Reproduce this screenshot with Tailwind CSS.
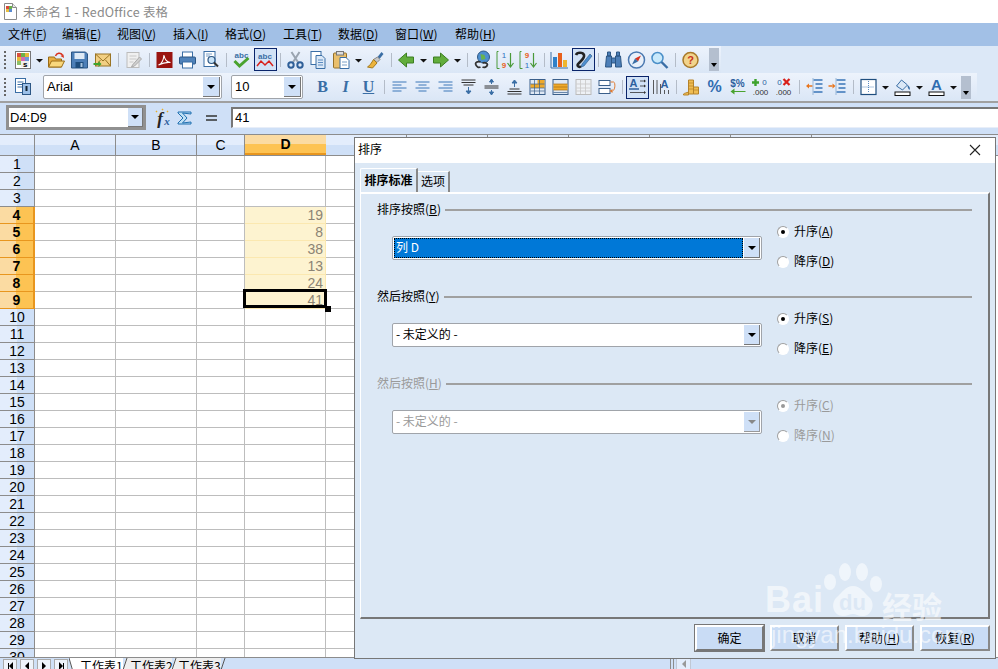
<!doctype html>
<html lang="zh-CN">
  <head>
    <meta charset="UTF-8" />
    <title>未命名 1 - RedOffice 表格</title>
    <script src="https://cdn.jsdelivr.net/npm/@tailwindcss/browser@4"></script>
  </head>
  <body class="relative flex flex-col w-[998px] h-[669px] overflow-hidden bg-white text-[12px] text-black font-['Noto_Sans_CJK_SC',sans-serif]">
    <!-- title bar -->
    <div class="flex items-center h-[23px] shrink-0 bg-white pl-[3px] text-[#8a8a8a] text-[12.5px]">
      <svg class="w-[15px] h-[17px] mr-[5px]" viewBox="0 0 15 17"><path d="M1.5.5h8l4 4v12h-12z" fill="#fff" stroke="#8a8a8a"/><path d="M9.5.5v4h4" fill="#e8e8e8" stroke="#8a8a8a"/><rect x="3" y="3" width="3" height="3" fill="#d84a3a"/><rect x="6" y="3" width="3" height="3" fill="#6ab04a"/><rect x="3" y="6" width="3" height="3" fill="#e8c040"/><rect x="6" y="6" width="3" height="3" fill="#5a8ad0"/></svg>
      <span class="mt-[2px] tracking-[0.2px]">未命名 1 - RedOffice 表格</span>
    </div>

    <!-- menu bar -->
    <div class="flex items-center h-[23px] shrink-0 bg-[#a2c0e6] pl-[8px] pb-[2px] text-[12px]">
      <span class="w-[54px]">文件(<u>F</u>)</span>
      <span class="w-[55px]">编辑(<u>E</u>)</span>
      <span class="w-[56px]">视图(<u>V</u>)</span>
      <span class="w-[52px]">插入(<u>I</u>)</span>
      <span class="w-[58px]">格式(<u>O</u>)</span>
      <span class="w-[55px]">工具(<u>T</u>)</span>
      <span class="w-[57px]">数据(<u>D</u>)</span>
      <span class="w-[60px]">窗口(<u>W</u>)</span>
      <span>帮助(<u>H</u>)</span>
    </div>

    <!-- standard toolbar -->
    <div class="flex h-[27px] shrink-0 bg-[#dce8f7]">
      <div class="flex items-center w-[721px] bg-gradient-to-b from-[#edf3fc] to-[#dae6f6]">
        <span class="w-[12px] h-[18px] ml-[4px] mr-[-4px] border-l-2 border-dotted border-[#666]"></span>
        <svg class="w-[22px] h-[20px]" viewBox="0 0 20 20"><rect x="2.5" y="1.5" width="15" height="17" fill="#fff" stroke="#777"/><rect x="4" y="3" width="4" height="4" fill="#d9503f"/><rect x="8" y="3" width="4" height="4" fill="#6cb14a"/><rect x="12" y="3" width="4" height="4" fill="#e6b93a"/><rect x="4" y="7" width="4" height="4" fill="#e6b93a"/><rect x="8" y="7" width="4" height="4" fill="#d56bb0"/><rect x="12" y="7" width="4" height="4" fill="#6d9ad8"/><rect x="4" y="11" width="4" height="4" fill="#8dc06a"/><rect x="8" y="11" width="8" height="6" fill="#eee"/><text x="10" y="17" font-size="8" font-family="Liberation Sans" font-weight="700">s</text></svg>
        <svg class="w-[11px] h-[20px]" viewBox="0 0 11 20"><path d="M2 9h7l-3.5 3.5z" fill="#111"/></svg>
        <svg class="w-[23px] h-[20px]" viewBox="0 0 20 20"><path d="M2 17V7h6l1 2h6v8z" fill="#e9ae42" stroke="#9a6c16"/><path d="M2 17l3-6h13l-3 6z" fill="#f9d77c" stroke="#9a6c16"/><path d="M9 6c1-3 5-4 7-1" fill="none" stroke="#d8321f" stroke-width="1.4"/><path d="M17.5 8l-3.5-2 3-1.5z" fill="#d8321f"/></svg>
        <svg class="w-[23px] h-[20px]" viewBox="0 0 20 20"><path d="M2 2h14l2 2v14H2z" fill="#4d7fb8" stroke="#2c5684"/><rect x="5" y="3" width="10" height="6" fill="#dfeaf6"/><rect x="6" y="12" width="8" height="6" fill="#1f4e7e"/><rect x="11" y="13" width="2" height="4" fill="#a8c4e0"/></svg>
        <svg class="w-[23px] h-[20px]" viewBox="0 0 20 20"><rect x="3" y="4" width="15" height="12" fill="#f2cf83" stroke="#9a7424"/><path d="M3 4l7.5 7L18 4M3 16l5-6M18 16l-5-6" fill="none" stroke="#9a7424"/><path d="M1 13h5v-2l3 3-3 3v-2H1z" fill="#3ea32e"/></svg>
        <span class="w-px h-[14px] mx-[3.5px] bg-[#b4bcc8]"></span>
        <svg class="w-[23px] h-[20px]" viewBox="0 0 20 20"><rect x="3.5" y="2.5" width="12" height="15" fill="#f0f0f0" stroke="#bcbcbc"/><path d="M6 6h7M6 9h7M6 12h4" stroke="#c8c8c8"/><path d="M9 15l7-8 2 2-7 7-3 1z" fill="#d0d0d0" stroke="#aaa"/></svg>
        <span class="w-px h-[14px] mx-[3.5px] bg-[#b4bcc8]"></span>
        <svg class="w-[23px] h-[20px]" viewBox="0 0 20 20"><rect x="2" y="2" width="16" height="16" fill="#9a1410"/><path d="M4 15c3-1 5-5 5.5-10 .5 4 3 7 6.5 7.5-4-.5-8 .5-12 2.500z" fill="none" stroke="#fff" stroke-width="1.1"/></svg>
        <svg class="w-[23px] h-[20px]" viewBox="0 0 20 20"><rect x="5" y="2" width="10" height="6" fill="#fff" stroke="#3a6ea5"/><rect x="2" y="7" width="16" height="7" rx="1" fill="#4f82ba" stroke="#2c5684"/><rect x="5" y="12" width="10" height="6" fill="#fff" stroke="#3a6ea5"/></svg>
        <svg class="w-[23px] h-[20px]" viewBox="0 0 20 20"><rect x="3.5" y="1.5" width="11" height="15" fill="#fff" stroke="#3a6ea5"/><path d="M5.5 4h6M5.5 6h4" stroke="#7aa0c8"/><circle cx="11" cy="10" r="3.5" fill="#c9e3f7" stroke="#2c5684" stroke-width="1.2"/><path d="M13.5 12.5l4 4" stroke="#333" stroke-width="2"/></svg>
        <span class="w-px h-[14px] mx-[3.5px] bg-[#b4bcc8]"></span>
        <svg class="w-[23px] h-[20px]" viewBox="0 0 20 20"><text x="10" y="8" font-size="8" text-anchor="middle" fill="#3a6ea5" font-family="Liberation Sans" font-weight="700">abc</text><path d="M3 11l5 5 9-8" fill="none" stroke="#4aa32f" stroke-width="3"/></svg>
        <div class="flex items-center justify-center w-[23px] h-[23px] mx-[0.5px] border border-[#0a246a] bg-[#d2e2f6]">
          <svg class="w-[20px] h-[20px]" viewBox="0 0 20 20"><text x="10" y="9" font-size="8" text-anchor="middle" fill="#3a6ea5" font-family="Liberation Sans" font-weight="700">abc</text><path d="M2 16l4-5 4 4 4-4 4 5" fill="none" stroke="#d8201a" stroke-width="1.5"/></svg>
        </div>
        <span class="w-px h-[14px] mx-[3px] bg-[#b4bcc8]"></span>
        <svg class="w-[23px] h-[20px]" viewBox="0 0 20 20"><path d="M6 2l7 11M14 2L7 13" stroke="#9aa4b0" stroke-width="2"/><circle cx="5.5" cy="15" r="2.7" fill="none" stroke="#2f5f98" stroke-width="2"/><circle cx="14.5" cy="15" r="2.7" fill="none" stroke="#2f5f98" stroke-width="2"/></svg>
        <svg class="w-[23px] h-[20px]" viewBox="0 0 20 20"><rect x="2.5" y="1.5" width="10" height="13" fill="#fff" stroke="#3a6ea5"/><path d="M7.5 5.5h6l3 3v10h-9z" fill="#dbe8f6" stroke="#3a6ea5"/><path d="M9.5 10h5M9.5 12.5h5M9.5 15h5" stroke="#5a8ac0"/></svg>
        <svg class="w-[23px] h-[20px]" viewBox="0 0 20 20"><rect x="2" y="3" width="13" height="15" rx="1" fill="#e9bf6c" stroke="#94702a"/><rect x="5" y="1.5" width="7" height="3.5" fill="#ddd" stroke="#777"/><path d="M8.500 7.5h6l3 3v8h-9z" fill="#fff" stroke="#3a6ea5"/><path d="M10.5 12h5M10.5 15h5" stroke="#7aa0c8"/></svg>
        <svg class="w-[11px] h-[20px]" viewBox="0 0 11 20"><path d="M2 9h7l-3.5 3.5z" fill="#111"/></svg>
        <svg class="w-[23px] h-[20px]" viewBox="0 0 20 20"><path d="M12 7l4-5 2 2-4 5z" fill="#3a6ea5"/><path d="M12 7l2.5 2.5-3 3-3.500-3z" fill="#c8c8c8" stroke="#888"/><path d="M8 9.5l3.5 3.5L7 18l-5-1c2-1 4-4 6-7.5z" fill="#ecb33c" stroke="#a57a1c"/></svg>
        <span class="w-px h-[14px] mx-[3.5px] bg-[#b4bcc8]"></span>
        <svg class="w-[23px] h-[20px]" viewBox="0 0 20 20"><path d="M2 10l8-7v4h7v6h-7v4z" fill="#62ad3c" stroke="#3d7f22"/></svg>
        <svg class="w-[11px] h-[20px]" viewBox="0 0 11 20"><path d="M2 9h7l-3.5 3.5z" fill="#111"/></svg>
        <svg class="w-[23px] h-[20px]" viewBox="0 0 20 20"><path d="M18 10l-8-7v4H3v6h7v4z" fill="#62ad3c" stroke="#3d7f22"/></svg>
        <svg class="w-[11px] h-[20px]" viewBox="0 0 11 20"><path d="M2 9h7l-3.5 3.5z" fill="#111"/></svg>
        <span class="w-px h-[14px] mx-[3.5px] bg-[#b4bcc8]"></span>
        <svg class="w-[23px] h-[20px]" viewBox="0 0 20 20"><circle cx="11" cy="7" r="6" fill="#4d8fd0" stroke="#2c5684"/><path d="M8 4l4 1 1 4-4 1z" fill="#69b24c"/><path d="M3 14c0-2 3-3 5-2M10 13c2-1 5 0 5 2M3 14c1 3 3 4 5 3M15 15c-1 2-3 3-5 2" fill="none" stroke="#333" stroke-width="1.8"/></svg>
        <svg class="w-[23px] h-[20px]" viewBox="0 0 20 20"><path d="M3 1.500H1.500v17H4" fill="none" stroke="#4a9a3a"/><text x="8.5" y="8" font-size="8" text-anchor="middle" fill="#2f6fc0" font-family="Liberation Sans">1</text><text x="8.5" y="18" font-size="8" text-anchor="middle" fill="#e8601c" font-weight="700" font-family="Liberation Sans">9</text><path d="M15 3v13m-3-3l3 4 3-4" fill="none" stroke="#4a9a3a" stroke-width="1.2"/></svg>
        <svg class="w-[23px] h-[20px]" viewBox="0 0 20 20"><path d="M3 1.500H1.500v17H4" fill="none" stroke="#4a9a3a"/><text x="8.5" y="8" font-size="8" text-anchor="middle" fill="#e8601c" font-weight="700" font-family="Liberation Sans">9</text><text x="8.5" y="18" font-size="8" text-anchor="middle" fill="#2f6fc0" font-family="Liberation Sans">1</text><path d="M15 3v13m-3-3l3 4 3-4" fill="none" stroke="#4a9a3a" stroke-width="1.2"/></svg>
        <span class="w-px h-[14px] mx-[3.5px] bg-[#b4bcc8]"></span>
        <svg class="w-[23px] h-[20px]" viewBox="0 0 20 20"><path d="M1.5 2v16h17" fill="none" stroke="#3a6ea5"/><rect x="3.5" y="7" width="4" height="10" fill="#2f80c8"/><rect x="8.5" y="3" width="4" height="14" fill="#e8601c"/><rect x="13.5" y="10" width="4" height="7" fill="#efb52e"/></svg>
        <div class="flex items-center justify-center w-[23px] h-[23px] mx-[0.5px] border border-[#0a246a] bg-[#d2e2f6]">
          <svg class="w-[20px] h-[20px]" viewBox="0 0 20 20"><path d="M3 5c1-3 7-3 8 0 .5 2-1 4-3 6l-3 3c-1.500 2 1.500 4 3 2" fill="none" stroke="#222" stroke-width="2.6"/><path d="M9 14l8-10 2 2-8 10-3 1z" fill="#4d8fd0" stroke="#2c5684" stroke-width=".6"/></svg>
        </div>
        <span class="w-px h-[14px] mx-[3px] bg-[#b4bcc8]"></span>
        <svg class="w-[23px] h-[20px]" viewBox="0 0 20 20"><path d="M3 6h5v11H2zM12 6h5l1 11h-6zM8 8h4v5H8zM4 2h3v4H4zM13 2h3v4h-3z" fill="#4d7fb8" stroke="#2c5684"/></svg>
        <svg class="w-[23px] h-[20px]" viewBox="0 0 20 20"><circle cx="10" cy="10" r="8" fill="#e8f0fa" stroke="#4a78b0" stroke-width="1.5"/><path d="M14.5 5.500l-3 6-3-3z" fill="#d8321f"/><path d="M5.500 14.500l3-6 3 3z" fill="#3a6ea5"/></svg>
        <svg class="w-[23px] h-[20px]" viewBox="0 0 20 20"><circle cx="8" cy="8" r="5.500" fill="#c9e9fb" stroke="#4a8fc8" stroke-width="1.5"/><path d="M12 12l6 6" stroke="#3a6ea5" stroke-width="2.4"/></svg>
        <span class="w-px h-[14px] mx-[3.5px] bg-[#b4bcc8]"></span>
        <svg class="w-[23px] h-[20px]" viewBox="0 0 20 20"><circle cx="10" cy="10" r="7.5" fill="#f2d48c" stroke="#a8792a" stroke-width="1.5"/><text x="10" y="14" font-size="11" text-anchor="middle" fill="#c8321f" font-weight="700" font-family="Liberation Sans">?</text></svg>
        <div class="flex items-end justify-center w-[10px] h-[23px] ml-[7px] pb-[4px] bg-[#b4bfcf]"><span class="border-x-[3px] border-t-[4px] border-x-transparent border-t-black"></span></div>
      </div>
    </div>

    <!-- formatting toolbar -->
    <div class="flex h-[30px] shrink-0 bg-[#dce8f7] border-b-2 border-[#a0a0a0]">
      <div class="flex items-center w-[977px] bg-gradient-to-b from-[#edf3fc] to-[#dae6f6]">
        <span class="w-[12px] h-[18px] ml-[4px] mr-[-4px] border-l-2 border-dotted border-[#666]"></span>
        <svg class="w-[22px] h-[20px]" viewBox="0 0 20 20"><rect x="2.5" y="1.5" width="10" height="14" fill="#fff" stroke="#3a6ea5"/><path d="M4.5 5h6M4.5 7.5h6M4.5 10h6" stroke="#3a6ea5"/><rect x="9.5" y="6.5" width="8" height="11" fill="#9cc0e8" stroke="#2c5684"/><path d="M13.5 9v5" stroke="#123" stroke-width="2"/></svg>
        <div class="flex items-center w-[179px] h-[24px] ml-[9px] border border-[#a0a4aa] rounded-[2px] bg-white pl-[3px] font-['Liberation_Sans',sans-serif] text-[13px]">
          <span class="flex-1">Arial</span>
          <span class="flex items-center justify-center w-[17px] h-[20px] mr-px bg-[#cfe0f7] border-r border-b border-[#777]"><span class="border-x-[4px] border-t-[4px] border-x-transparent border-t-black"></span></span>
        </div>
        <div class="flex items-center w-[72px] h-[24px] ml-[9px] border border-[#a0a4aa] rounded-[2px] bg-white pl-[3px] font-['Liberation_Sans',sans-serif] text-[13px]">
          <span class="flex-1">10</span>
          <span class="flex items-center justify-center w-[17px] h-[20px] mr-px bg-[#cfe0f7] border-r border-b border-[#777]"><span class="border-x-[4px] border-t-[4px] border-x-transparent border-t-black"></span></span>
        </div>
        <span class="flex justify-center w-[23px] ml-[8px] font-['Liberation_Serif',serif] font-bold text-[16px] text-[#3a6ea5]">B</span>
        <span class="flex justify-center w-[23px] font-['Liberation_Serif',serif] font-bold italic text-[16px] text-[#3a6ea5]">I</span>
        <span class="flex justify-center w-[23px] font-['Liberation_Serif',serif] font-bold underline text-[16px] text-[#3a6ea5]">U</span>
        <span class="w-px h-[14px] mx-[3.5px] bg-[#b4bcc8]"></span>
        <svg class="w-[23px] h-[20px]" viewBox="0 0 20 20"><path d="M3 5h14M3 8h9M3 11h14M3 14h9" stroke="#3a76b8"/></svg>
        <svg class="w-[23px] h-[20px]" viewBox="0 0 20 20"><path d="M3 5h14M6 8h8M3 11h14M6 14h8" stroke="#3a76b8"/></svg>
        <svg class="w-[23px] h-[20px]" viewBox="0 0 20 20"><path d="M3 5h14M8 8h9M3 11h14M8 14h9" stroke="#3a76b8"/></svg>
        <svg class="w-[23px] h-[20px]" viewBox="0 0 20 20"><path d="M3 3h14M3 5.5h14M5 8h10" stroke="#333"/><path d="M10 10v4m-2.500 0h5l-2.500 3z" fill="#3a6ea5" stroke="#3a6ea5"/></svg>
        <svg class="w-[23px] h-[20px]" viewBox="0 0 20 20"><path d="M3 9h14M3 11h14" stroke="#333"/><path d="M10 2l-2 3h4zM10 18l-2-3h4zM10 5v2M10 13v2" fill="#3a6ea5" stroke="#3a6ea5"/></svg>
        <svg class="w-[23px] h-[20px]" viewBox="0 0 20 20"><path d="M5 12h10M3 14.5h14M3 17h14" stroke="#333"/><path d="M10 10V6M7.5 6h5L10 3z" fill="#3a6ea5" stroke="#3a6ea5"/></svg>
        <svg class="w-[23px] h-[20px]" viewBox="0 0 20 20"><rect x="2.5" y="2.5" width="15" height="15" fill="#dfe8f4" stroke="#3a5f8a"/><rect x="3" y="7" width="14" height="4" fill="#efa92a"/><rect x="10" y="3" width="7" height="4" fill="#efa92a"/><path d="M3 7h14M3 11h14M3 14h14M7 3v14M12 3v14" stroke="#3a5f8a" stroke-width=".7"/></svg>
        <svg class="w-[23px] h-[20px]" viewBox="0 0 20 20"><rect x="2.5" y="2.5" width="15" height="15" fill="#dfe8f4" stroke="#3a5f8a"/><rect x="3" y="7" width="14" height="6" fill="#efa92a"/><path d="M3 7h14M3 10h14M3 13h14" stroke="#a86c10" stroke-width=".7"/><path d="M3 15.5h14" stroke="#3a5f8a" stroke-width=".7"/></svg>
        <svg class="w-[23px] h-[20px]" viewBox="0 0 20 20"><rect x="2.5" y="2.5" width="15" height="15" fill="#eef1f5" stroke="#bbb"/><path d="M3 7h14M3 11h14M3 14h14M7 3v14M12 3v14" stroke="#c8c8c8" stroke-width=".8"/></svg>
        <svg class="w-[23px] h-[20px]" viewBox="0 0 20 20"><rect x="2.5" y="3.5" width="11" height="5" fill="#fff" stroke="#3a5f8a"/><rect x="2.5" y="11.5" width="11" height="5" fill="#fff" stroke="#3a5f8a"/><path d="M14 5h3c2 0 2 8-1 9" fill="none" stroke="#e07a30"/><path d="M13 14l3-2v4z" fill="#e07a30"/></svg>
        <span class="w-px h-[14px] mx-[3.5px] bg-[#b4bcc8]"></span>
        <div class="flex items-center justify-center w-[23px] h-[23px] border border-[#0a246a] bg-[#d2e2f6]">
          <svg class="w-[20px] h-[20px]" viewBox="0 0 20 20"><text x="5.5" y="10" font-size="11" text-anchor="middle" fill="#2c5f9e" font-weight="700" font-family="Liberation Sans">A</text><path d="M1 12h10" stroke="#2c5f9e" stroke-width="1.5"/><path d="M12 4h5M12 9h5M2 15.5h15" stroke="#333" stroke-width=".8"/><path d="M18 4l-2-1.5v3zM18 9l-2-1.5v3zM18 15.5l-2-1.5v3z" fill="#333"/></svg>
        </div>
        <svg class="w-[23px] h-[20px]" viewBox="0 0 20 20"><text x="14" y="11" font-size="11" text-anchor="middle" fill="#2c5f9e" font-weight="700" font-family="Liberation Sans">A</text><path d="M3 3v14M6.5 3v14M10 7v10M14 13v4M18 13v4" stroke="#333" stroke-width=".8"/></svg>
        <span class="w-px h-[14px] mx-[3.5px] bg-[#b4bcc8]"></span>
        <svg class="w-[23px] h-[20px]" viewBox="0 0 20 20"><path d="M7 3h5v14H7z" fill="#efbc52" stroke="#b5832a"/><path d="M12 10h5v7h-5z" fill="#efbc52" stroke="#b5832a"/><path d="M2 17c1-1 3-1 5-2v3H2z" fill="#efbc52" stroke="#b5832a"/><path d="M7 6h5M7 9h5M7 12h5M12 13h5" stroke="#b5832a" stroke-width=".7"/></svg>
        <span class="flex justify-center w-[23px] font-['Liberation_Sans',sans-serif] font-bold text-[16px] text-[#2f6cb0]">%</span>
        <svg class="w-[23px] h-[20px]" viewBox="0 0 20 20"><text x="10" y="10" font-size="10" text-anchor="middle" fill="#2c5f9e" font-weight="700" font-family="Liberation Sans">$%</text><path d="M18 14H7v-2.5L3 14.500l4 3V15h11z" fill="#4aa32f"/></svg>
        <svg class="w-[23px] h-[20px]" viewBox="0 0 20 20"><path d="M5 2v7M1.5 5.500h7" stroke="#3ea32e" stroke-width="2.4"/><text x="14" y="8" font-size="8" text-anchor="middle" fill="#2c5f9e" font-family="Liberation Sans">0</text><text x="10" y="18" font-size="8" text-anchor="middle" fill="#333" font-family="Liberation Sans">.000</text></svg>
        <svg class="w-[23px] h-[20px]" viewBox="0 0 20 20"><text x="6" y="8" font-size="8" text-anchor="middle" fill="#2c5f9e" font-family="Liberation Sans">0</text><path d="M10 2l6 6M16 2l-6 6" stroke="#d8201a" stroke-width="2.2"/><text x="10" y="18" font-size="8" text-anchor="middle" fill="#333" font-family="Liberation Sans">.000</text></svg>
        <span class="w-px h-[14px] mx-[3.5px] bg-[#b4bcc8]"></span>
        <svg class="w-[23px] h-[20px]" viewBox="0 0 20 20"><path d="M9 3h9M11 7h7M11 11h7M9 15h9" stroke="#3a76b8" stroke-width="1.3"/><path d="M8 9H4" stroke="#e8751c" stroke-width="1.5"/><path d="M1.5 9l3-2.5v5z" fill="#e8751c"/><path d="M8.500 1v17" stroke="#7aa0c8" stroke-width=".7"/></svg>
        <svg class="w-[23px] h-[20px]" viewBox="0 0 20 20"><path d="M9 3h9M11 7h7M11 11h7M9 15h9" stroke="#3a76b8" stroke-width="1.3"/><path d="M1 9h4" stroke="#e8751c" stroke-width="1.5"/><path d="M8 9L5 6.5v5z" fill="#e8751c"/><path d="M8.500 1v17" stroke="#7aa0c8" stroke-width=".7"/></svg>
        <span class="w-px h-[14px] mx-[3.5px] bg-[#b4bcc8]"></span>
        <svg class="w-[23px] h-[20px]" viewBox="0 0 20 20"><rect x="2.5" y="2.5" width="15" height="15" fill="#fff" stroke="#1f4e7e" stroke-width="1.2"/><path d="M10 4v12M4 10h12" stroke="#5a8ac0" stroke-dasharray="1 1"/></svg>
        <svg class="w-[11px] h-[20px]" viewBox="0 0 11 20"><path d="M2 9h7l-3.5 3.500z" fill="#111"/></svg>
        <svg class="w-[23px] h-[20px]" viewBox="0 0 20 20"><path d="M4 9l5-6 6 5-5 5z" fill="#dbe8f6" stroke="#3a6ea5"/><path d="M15 8c2 1 3 3 2 5-1-1-2-2-2-5z" fill="#3a6ea5"/><rect x="2.5" y="15" width="15" height="3.5" fill="#fff" stroke="#111"/></svg>
        <svg class="w-[11px] h-[20px]" viewBox="0 0 11 20"><path d="M2 9h7l-3.5 3.500z" fill="#111"/></svg>
        <svg class="w-[23px] h-[20px]" viewBox="0 0 20 20"><text x="10" y="13" font-size="15" text-anchor="middle" fill="#2f6cb0" font-weight="700" font-family="Liberation Sans">A</text><rect x="2.5" y="15" width="15" height="3.5" fill="#fff" stroke="#111"/></svg>
        <svg class="w-[11px] h-[20px]" viewBox="0 0 11 20"><path d="M2 9h7l-3.5 3.500z" fill="#111"/></svg>
        <div class="flex items-end justify-center w-[10px] h-[23px] ml-[2px] pb-[4px] bg-[#b4bfcf]"><span class="border-x-[3px] border-t-[4px] border-x-transparent border-t-black"></span></div>
      </div>
    </div>

    <!-- formula bar -->
    <div class="flex items-start h-[32px] shrink-0 bg-[#cfe0f7] border-b border-[#8c8c8c] pl-[6px]">
      <div class="flex items-center w-[140px] h-[25px] mt-[2px] border-[3px] border-[#909090] bg-white pl-[1px] font-['Liberation_Sans',sans-serif] text-[13px]">
        <span class="flex-1">D4:D9</span>
        <span class="flex items-center justify-center w-[15px] h-[19px] bg-[#cfe0f7] border-r border-b border-[#777]"><span class="border-x-[4px] border-t-[4px] border-x-transparent border-t-black"></span></span>
      </div>
      <svg class="w-[22px] h-[20px] mt-[5px] ml-[5px]" viewBox="0 0 22 20"><text x="9" y="16" font-size="17" text-anchor="middle" fill="#222" font-style="italic" font-weight="700" font-family="Liberation Serif">f</text><text x="16" y="17" font-size="11" text-anchor="middle" fill="#2c5f9e" font-style="italic" font-weight="700" font-family="Liberation Serif">x</text><path d="M5 3l1 1M11 1l1 1M16 3l1 1" stroke="#e8b02a" stroke-width="1.5"/></svg>
      <svg class="w-[22px] h-[20px] mt-[5px] ml-[1px]" viewBox="0 0 22 20"><path d="M4 4h13v2L8.500 5 13 10l-4.500 5 8.500-1v2H4v-1l5-5-5-5z" fill="#bfe0f5" stroke="#1f6fb0"/></svg>
      <svg class="w-[22px] h-[20px] mt-[5px] ml-[4px]" viewBox="0 0 22 20"><path d="M6 8h11M6 12h11" stroke="#333" stroke-width="1.5"/></svg>
      <div class="flex flex-1 items-center h-[21px] mt-[4px] ml-[9px] border-l-2 border-t-2 border-[#777] border-b border-b-[#e8eef8] bg-white pl-[2px] font-['Liberation_Sans',sans-serif] text-[13px]">41</div>
    </div>

    <!-- sheet grid, rows are filled in below -->
    <div id="grid" class="flex-1 min-h-0 overflow-hidden bg-white font-['Liberation_Sans',sans-serif] text-[14px]">
      <div class="flex h-[21px] border-b border-[#8c8c8c]">
        <div class="w-[35px] shrink-0 border-r border-[#8c8c8c] bg-gradient-to-b from-[#e3edfc] from-50% to-[#cfe0f7] to-50%"></div>
        <div class="flex items-center justify-center w-[81px] shrink-0 border-r border-[#8c8c8c] bg-gradient-to-b from-[#e3edfc] from-50% to-[#cfe0f7] to-50%">A</div>
        <div class="flex items-center justify-center w-[81px] shrink-0 border-r border-[#8c8c8c] bg-gradient-to-b from-[#e3edfc] from-50% to-[#cfe0f7] to-50%">B</div>
        <div class="flex items-center justify-center w-[48px] shrink-0 border-r border-[#8c8c8c] bg-gradient-to-b from-[#e3edfc] from-50% to-[#cfe0f7] to-50%">C</div>
        <div class="flex items-center justify-center w-[81px] shrink-0 border-b-2 border-[#e8961e] font-bold bg-gradient-to-b from-[#fbdba2] from-50% to-[#fdc353] to-50%">D</div>
        <div class="w-[81px] shrink-0 border-r border-[#8c8c8c] bg-gradient-to-b from-[#e3edfc] from-50% to-[#cfe0f7] to-50%"></div>
        <div class="w-[81px] shrink-0 border-r border-[#8c8c8c] bg-gradient-to-b from-[#e3edfc] from-50% to-[#cfe0f7] to-50%"></div>
        <div class="w-[81px] shrink-0 border-r border-[#8c8c8c] bg-gradient-to-b from-[#e3edfc] from-50% to-[#cfe0f7] to-50%"></div>
        <div class="w-[81px] shrink-0 border-r border-[#8c8c8c] bg-gradient-to-b from-[#e3edfc] from-50% to-[#cfe0f7] to-50%"></div>
        <div class="w-[81px] shrink-0 border-r border-[#8c8c8c] bg-gradient-to-b from-[#e3edfc] from-50% to-[#cfe0f7] to-50%"></div>
        <div class="w-[81px] shrink-0 border-r border-[#8c8c8c] bg-gradient-to-b from-[#e3edfc] from-50% to-[#cfe0f7] to-50%"></div>
        <div class="flex-1 bg-gradient-to-b from-[#e3edfc] from-50% to-[#cfe0f7] to-50%"></div>
      </div>
    </div>

    <!-- sheet tabs -->
    <div class="relative flex items-start h-[12px] shrink-0 bg-[#cfe0f7] border-t border-[#8c8c8c] overflow-hidden text-[12px] leading-[16px] whitespace-nowrap">
      <div class="flex gap-[3px] pl-[3px] pt-px w-[69px] h-full bg-[#cfe0f7]">
        <span class="flex items-center justify-center w-[14px] h-[14px] border border-[#aaa] bg-[#eef3fb]"><span class="w-px h-[7px] bg-black"></span><span class="border-y-[4px] border-r-[4px] border-y-transparent border-r-black"></span></span>
        <span class="flex items-center justify-center w-[14px] h-[14px] border border-[#aaa] bg-[#eef3fb]"><span class="border-y-[4px] border-r-[4px] border-y-transparent border-r-black"></span></span>
        <span class="flex items-center justify-center w-[14px] h-[14px] border border-[#aaa] bg-[#eef3fb]"><span class="border-y-[4px] border-l-[4px] border-y-transparent border-l-black"></span></span>
        <span class="flex items-center justify-center w-[14px] h-[14px] border border-[#aaa] bg-[#eef3fb]"><span class="border-y-[4px] border-l-[4px] border-y-transparent border-l-black"></span><span class="w-px h-[7px] bg-black"></span></span>
      </div>
      <svg class="w-[7px] h-[12px] shrink-0" viewBox="0 0 7 12"><path d="M0 0h7v12H3z" fill="#fff"/><path d="M0 0l3.500 12" stroke="#555" fill="none"/></svg>
      <div class="w-[47px] h-[12px] pl-[4px] bg-white">工作表1</div>
      <svg class="w-[7px] h-[12px] shrink-0" viewBox="0 0 7 12"><path d="M0 12L3 0h4v12z" fill="#eee"/><path d="M0 12L4 0" stroke="#555" fill="none"/></svg>
      <div class="w-[42px] h-[12px] bg-[#eeeeee]">工作表2</div>
      <svg class="w-[6px] h-[12px] shrink-0" viewBox="0 0 6 12"><path d="M0 12L3 0h3v12z" fill="#eee"/><path d="M0 12L4 0" stroke="#555" fill="none"/></svg>
      <div class="w-[43px] h-[12px] bg-[#eeeeee]">工作表3</div>
      <svg class="w-[6px] h-[12px] shrink-0" viewBox="0 0 6 12"><path d="M0 12L4 0" stroke="#555" fill="none"/></svg>
      <div class="absolute left-[670px] top-0 flex h-[12px]">
        <span class="w-[4px] border-x border-[#8c8c8c]"></span>
        <span class="flex items-center justify-center w-[15px] ml-[2px] border-x border-[#c0c8d4] bg-[#e3edfc]"><span class="border-y-[4px] border-r-[4px] border-y-transparent border-r-[#999]"></span></span>
      </div>
    </div>

    <!-- sort dialog -->
    <div class="absolute left-[354px] top-[137px] flex flex-col w-[642px] h-[522px] border border-[#777] bg-[#dce8f5] z-10 text-[12px]">
      <div class="flex items-center justify-between h-[25px] shrink-0 bg-white pl-[3px] pr-[14px] pb-[2px]">
        <span class="relative -top-px">排序</span>
        <svg class="w-[12px] h-[12px]" viewBox="0 0 12 12"><path d="M1 1l10 10M11 1L1 11" stroke="#222" stroke-width="1.1"/></svg>
      </div>
      <div class="flex items-end h-[29px] shrink-0 pl-[5px]">
        <div class="flex items-center justify-center w-[58px] h-[24px] pb-[2px] border-t border-l border-white border-r-2 border-r-[#888] rounded-tl-[2px] font-bold">排序标准</div>
        <div class="flex items-center justify-center w-[32px] h-[21px] pb-[2px] border-t border-white border-r-2 border-r-[#888]">选项</div>
      </div>
      <div class="flex-1 min-h-0 ml-[5px] mr-[5px] border-t-2 border-l border-white border-r-2 border-r-[#777] border-b-2 border-b-[#777] pt-[8px]">
        <!-- first key -->
        <div class="h-[87px]">
          <div class="flex items-center h-[16px] pl-[16px] pr-[16px]">
            <span class="relative -top-px mr-[4px]">排序按照(<u>B</u>)</span><span class="flex-1 h-[2px] bg-[#a0a0a0]"></span>
          </div>
          <div class="flex pl-[31px]">
            <div class="flex items-center w-[370px] h-[24px] mt-[18px] border border-[#a0a4aa] rounded-[2px] bg-white p-[1px]">
              <span class="flex flex-1 items-center h-full pb-[2px] bg-[#0078d7] text-white pl-[1px] border border-dotted border-black">列 D</span>
              <span class="flex items-center justify-center w-[16px] h-[20px] ml-px bg-[#cfe0f7] border-r border-b border-[#777]"><span class="border-x-[4px] border-t-[4px] border-x-transparent border-t-black"></span></span>
            </div>
            <div class="flex flex-col gap-[12px] ml-[15px] mt-[5px]">
              <label class="flex items-center h-[18px]"><span class="flex items-center justify-center w-[12px] h-[12px] mr-[5px] rounded-full border border-[#a0a0a0] border-r-white border-b-white bg-white"><span class="w-[4px] h-[4px] rounded-full bg-black"></span></span><span class="relative -top-px">升序(<u>A</u>)</span></label>
              <label class="flex items-center h-[18px]"><span class="w-[12px] h-[12px] mr-[5px] rounded-full border border-[#a0a0a0] border-r-white border-b-white bg-white"></span><span class="relative -top-px">降序(<u>D</u>)</span></label>
            </div>
          </div>
        </div>
        <!-- second key -->
        <div class="h-[87px]">
          <div class="flex items-center h-[16px] pl-[16px] pr-[16px]">
            <span class="relative -top-px mr-[4px]">然后按照(<u>Y</u>)</span><span class="flex-1 h-[2px] bg-[#a0a0a0]"></span>
          </div>
          <div class="flex pl-[31px]">
            <div class="flex items-center w-[370px] h-[24px] mt-[18px] border border-[#a0a4aa] rounded-[2px] bg-white p-[1px]">
              <span class="flex flex-1 items-center h-full pb-[2px] pl-[2px]">- 未定义的 -</span>
              <span class="flex items-center justify-center w-[16px] h-[20px] ml-px bg-[#cfe0f7] border-r border-b border-[#777]"><span class="border-x-[4px] border-t-[4px] border-x-transparent border-t-black"></span></span>
            </div>
            <div class="flex flex-col gap-[12px] ml-[15px] mt-[5px]">
              <label class="flex items-center h-[18px]"><span class="flex items-center justify-center w-[12px] h-[12px] mr-[5px] rounded-full border border-[#a0a0a0] border-r-white border-b-white bg-white"><span class="w-[4px] h-[4px] rounded-full bg-black"></span></span><span class="relative -top-px">升序(<u>S</u>)</span></label>
              <label class="flex items-center h-[18px]"><span class="w-[12px] h-[12px] mr-[5px] rounded-full border border-[#a0a0a0] border-r-white border-b-white bg-white"></span><span class="relative -top-px">降序(<u>E</u>)</span></label>
            </div>
          </div>
        </div>
        <!-- third key, disabled -->
        <div class="h-[87px] text-[#9a9a9a]">
          <div class="flex items-center h-[16px] pl-[16px] pr-[16px]">
            <span class="relative -top-px mr-[4px]">然后按照(<u>H</u>)</span><span class="flex-1 h-[2px] bg-[#a0a0a0]"></span>
          </div>
          <div class="flex pl-[31px]">
            <div class="flex items-center w-[370px] h-[24px] mt-[18px] border border-[#a0a4aa] rounded-[2px] bg-white p-[1px]">
              <span class="flex flex-1 items-center h-full pb-[2px] pl-[2px]">- 未定义的 -</span>
              <span class="flex items-center justify-center w-[16px] h-[20px] ml-px bg-[#cfe0f7] border-r border-b border-[#999]"><span class="border-x-[4px] border-t-[4px] border-x-transparent border-t-[#888]"></span></span>
            </div>
            <div class="flex flex-col gap-[12px] ml-[15px] mt-[5px]">
              <label class="flex items-center h-[18px]"><span class="flex items-center justify-center w-[12px] h-[12px] mr-[5px] rounded-full border border-[#a0a0a0] border-r-white border-b-white bg-white"><span class="w-[4px] h-[4px] rounded-full bg-[#999]"></span></span><span class="relative -top-px">升序(<u>C</u>)</span></label>
              <label class="flex items-center h-[18px]"><span class="w-[12px] h-[12px] mr-[5px] rounded-full border border-[#a0a0a0] border-r-white border-b-white bg-white"></span><span class="relative -top-px">降序(<u>N</u>)</span></label>
            </div>
          </div>
        </div>
      </div>
      <div class="flex justify-end gap-[6px] h-[39px] shrink-0 pt-[6px] pr-[5px]">
        <button class="w-[69px] h-[26px] bg-[#c9dcf5] border-2 border-t-white border-l-white border-r-[#777] border-b-[#777] outline outline-[#777]">确定</button>
        <button class="w-[69px] h-[26px] bg-[#c9dcf5] border-2 border-t-white border-l-white border-r-[#888] border-b-[#888]">取消</button>
        <button class="w-[69px] h-[26px] bg-[#c9dcf5] border-2 border-t-white border-l-white border-r-[#888] border-b-[#888]">帮助(<u>H</u>)</button>
        <button class="w-[70px] h-[26px] bg-[#c9dcf5] border-2 border-t-white border-l-white border-r-[#888] border-b-[#888]">恢复(<u>R</u>)</button>
      </div>
    </div>

    <!-- watermark over the dialog -->
    <div class="absolute left-[765px] top-[560px] z-20 w-[180px] h-[95px] pointer-events-none text-white/60">
      <svg class="absolute left-[58px] top-[2px] w-[62px] h-[58px]" viewBox="0 0 62 58" fill="#fff" fill-opacity=".55"><ellipse cx="7" cy="20" rx="6" ry="8"/><ellipse cx="22" cy="10" rx="6" ry="9"/><ellipse cx="39" cy="10" rx="6" ry="9"/><ellipse cx="53" cy="22" rx="6" ry="8"/><path d="M30 24c8 0 11 7 17 12 6 7 1 19-8 18-4 0-6-2-9-2s-6 2-10 2c-9 0-13-11-7-18 6-5 9-12 17-12z"/></svg>
      <span class="absolute left-[0px] top-[20px] font-['Liberation_Sans',sans-serif] font-bold text-[36px] leading-[40px] tracking-[1px]">Bai</span>
      <span class="absolute left-[74px] top-[30px] font-['Liberation_Sans',sans-serif] font-bold text-[22px] leading-[26px] text-[#dce8f5]">du</span>
      <span class="absolute left-[117px] top-[28px] font-bold text-[30px] leading-[34px] whitespace-nowrap">经验</span>
      <span class="absolute left-[6px] top-[61px] font-['Liberation_Sans',sans-serif] text-[24px] leading-[28px] whitespace-nowrap">jingyan.baidu.com</span>
    </div>

    <script>
      // fill the grid: row 4-9 are the selection, D holds the values
      var values = { 4: 19, 5: 8, 6: 38, 7: 13, 8: 24, 9: 41 };
      var grid = document.getElementById("grid");
      var widths = ["w-[81px]", "w-[81px]", "w-[48px]", "w-[81px]", "w-[81px]", "w-[81px]", "w-[81px]", "w-[81px]", "w-[81px]", "w-[81px]", "w-[81px]"];
      for (var r = 1; r <= 30; r++) {
        var sel = values[r] !== undefined;
        var html = sel
          ? '<div class="flex items-center justify-center w-[35px] h-[17px] shrink-0 border-r-2 border-b border-[#e8961e] font-bold bg-gradient-to-r from-[#fbdba2] from-50% to-[#fdc353] to-50%">' + r + "</div>"
          : '<div class="flex items-center justify-center w-[35px] h-[17px] shrink-0 border-r border-b border-[#8c8c8c] bg-gradient-to-r from-[#e3edfc] from-50% to-[#cfe0f7] to-50%">' + r + "</div>";
        for (var c = 0; c < widths.length; c++) {
          if (c == 3 && sel) {
            html += '<div class="flex items-center justify-end ' + widths[c] + ' h-[17px] shrink-0 pr-[2px] bg-[#fdf3d0] border-r border-b border-[#fbe8b0] text-[#8c8474]">' + values[r] + "</div>";
          } else {
            html += '<div class="' + widths[c] + ' h-[17px] shrink-0 border-r border-b border-[#bdbdbd]"></div>';
          }
        }
        grid.insertAdjacentHTML("beforeend", '<div class="flex h-[17px]">' + html + "</div>");
      }
      // cell cursor on D9 with its fill handle
      grid.insertAdjacentHTML(
        "beforeend",
        '<div class="absolute left-[243px] top-[289px] w-[84px] h-[19px] border-[3px] border-black"></div><div class="absolute left-[325px] top-[306px] w-[6px] h-[6px] bg-black"></div>'
      );
    </script>
  </body>
</html>
